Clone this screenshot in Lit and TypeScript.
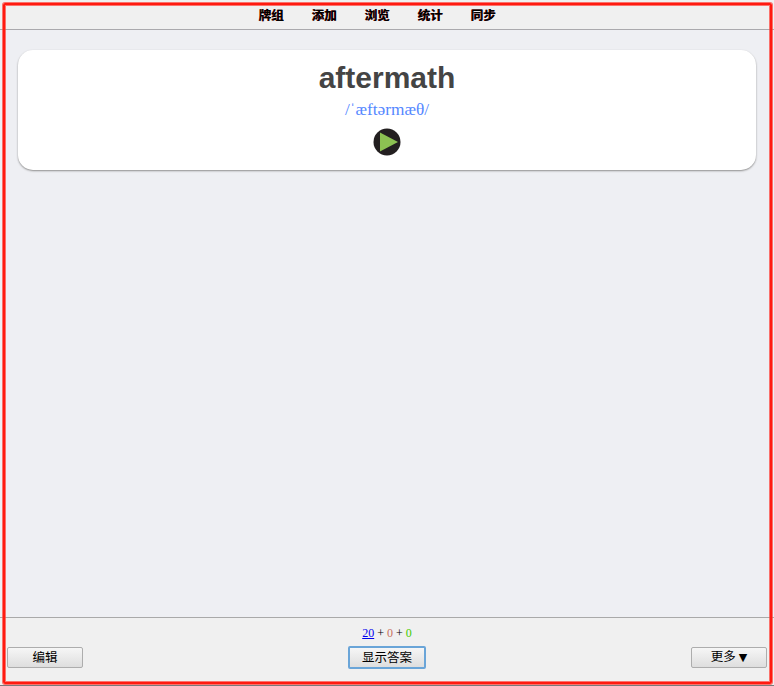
import { LitElement, html, css } from "lit";
import { customElement } from "lit/decorators.js";

@customElement("app-root")
export class AppRoot extends LitElement {
  static styles = css`
    :host {
      display: block;
      position: relative;
      width: 774px;
      height: 686px;
      overflow: hidden;
      font-family: "Liberation Sans", "Noto Sans CJK SC", sans-serif;
      background: #eeeff3;
    }
    .page {
      display: flex;
      flex-direction: column;
      height: 100%;
    }
    .top {
      height: 29px;
      box-sizing: border-box;
      flex: none;
      display: flex;
      justify-content: center;
      align-items: center;
      gap: 28px;
      padding: 0 19px 0 0;
      margin-bottom: 1px;
      background: #f0f0f0;
      box-shadow: 0 1px 0 #aaa9ad;
      font: bold 12.5px/16px "Noto Sans CJK SC", sans-serif;
      color: #000;
    }
    .top span {
      text-shadow: -0.5px 0 0 #7a0000;
    }
    main {
      flex: 1;
      padding: 20px 18px 0 18px;
    }
    .card {
      height: 120px;
      background: #fff;
      border-radius: 15px;
      box-shadow: 0 1px 2px #8d8d8d;
      display: flex;
      flex-direction: column;
      align-items: center;
      color: #444;
    }
    .word {
      margin-top: 10px;
      font-size: 30px;
      font-weight: bold;
      line-height: 36px;
    }
    .ipa {
      margin-top: 4px;
      font: 17.3px/20px "Liberation Serif", serif;
      color: #5588ff;
    }
    .play {
      margin-top: 8px;
      display: block;
    }
    footer {
      height: 68px;
      flex: none;
      background: #f0f0f0;
      border-top: 1px solid #a9a9a9;
      display: flex;
      flex-direction: column;
      align-items: stretch;
    }
    .counts {
      margin-top: 8px;
      height: 14px;
      text-align: center;
      font: 12px/14px "Liberation Serif", "Noto Sans CJK SC", serif;
      color: #000;
    }
    .counts a { color: #00e; text-decoration: underline; }
    .counts .r { color: #c8705f; }
    .counts .g { color: #44cc00; }
    .buttons {
      display: flex;
      justify-content: space-between;
      align-items: center;
      margin-top: 6px;
      padding: 0 7px;
    }
    button {
      box-sizing: border-box;
      width: 76px;
      height: 21px;
      padding: 0 0 2px 0;
      font: 12.5px/13px "Noto Sans CJK SC", sans-serif;
      color: #000;
      border: 1px solid #adadad;
      border-radius: 2px;
      background: linear-gradient(#f6f6f6, #dedede);
    }
    button.primary {
      width: 78px;
      height: 23px;
      border: 2px solid #6aa5d8;
    }
    .arrow {
      margin-left: 3px;
      font-size: 11px;
      font-family: "DejaVu Sans", sans-serif;
    }
    .edge {
      position: absolute;
      left: 0;
      right: 0;
      bottom: 0;
      height: 1px;
      background: #7a7a7a;
    }
    .frame {
      position: absolute;
      left: 3px;
      top: 3px;
      right: 2px;
      bottom: 2px;
      border: 2px solid #ff1a10;
      border-radius: 2px;
      box-shadow: 0 0 0 1px rgba(255, 60, 50, 0.7), inset 0 0 0 1px rgba(255, 60, 50, 0.7);
      pointer-events: none;
    }
  `;

  render() {
    return html`
      <div class="page">
        <div class="top">
          <span>牌组</span><span>添加</span><span>浏览</span><span>统计</span><span>同步</span>
        </div>
        <main>
          <div class="card">
            <div class="word">aftermath</div>
            <div class="ipa">/ˈæftərmæθ/</div>
            <svg class="play" width="28" height="28" viewBox="0 0 28 28">
              <circle cx="14" cy="14" r="13.5" fill="#231f20"></circle>
              <path d="M7 4.5 L25 14 L7 23.5 Z" fill="#8cc152"></path>
            </svg>
          </div>
        </main>
        <footer>
          <div class="counts"><a href="#">20</a> + <span class="r">0</span> + <span class="g">0</span></div>
          <div class="buttons">
            <button>编辑</button>
            <button class="primary">显示答案</button>
            <button>更多<span class="arrow">▼</span></button>
          </div>
        </footer>
      </div>
      <div class="edge"></div>
      <div class="frame"></div>
    `;
  }
}
